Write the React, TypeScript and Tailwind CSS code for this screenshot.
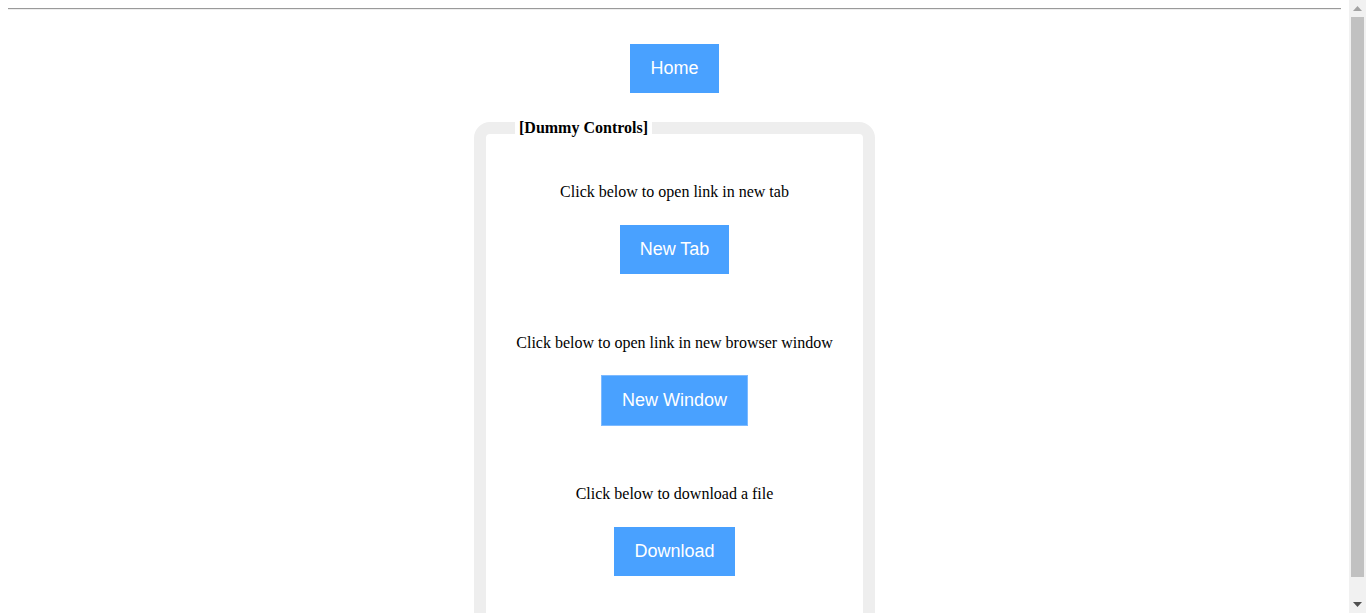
import React from "react";

const serif = { fontFamily: '"Liberation Serif", "Times New Roman", serif' };

function BlueButton({ label, bordered }: { label: string; bordered?: boolean }) {
  return (
    <button
      className={
        "bg-[#49a1ff] text-white text-[18px] leading-[21px] px-5 py-[14px] font-['Liberation_Sans',Arial,sans-serif] " +
        (bordered ? "border border-[#7dbaff]" : "")
      }
    >
      {label}
    </button>
  );
}

function Section({ text, label, bordered }: { text: string; label: string; bordered?: boolean }) {
  return (
    <div className="flex flex-col items-center">
      <p className="text-[16px] leading-[18px] text-black" style={serif}>
        {text}
      </p>
      <div className={bordered ? "mt-[23px]" : "mt-[24px]"}>
        <BlueButton label={label} bordered={bordered} />
      </div>
    </div>
  );
}

function Scrollbar() {
  return (
    <div className="w-[17px] h-full bg-[#f1f1f1] flex flex-col items-center shrink-0">
      <div className="h-[17px] flex items-center justify-center">
        <svg width="9" height="5" viewBox="0 0 9 5">
          <polygon points="4.5,0 9,5 0,5" fill="#a3a3a3" />
        </svg>
      </div>
      <div className="flex-1 w-[13px] bg-[#c1c1c1] mb-[19px]" />
      <div className="h-[17px] flex items-center justify-center">
        <svg width="9" height="5" viewBox="0 0 9 5">
          <polygon points="0,0 9,0 4.5,5" fill="#505050" />
        </svg>
      </div>
    </div>
  );
}

export default function App() {
  return (
    <div className="h-[613px] flex overflow-hidden bg-white">
      <div className="flex-1 min-w-0 px-2 pt-2">
        <hr className="border-t border-t-[#9a9a9a] border-b border-b-[#eeeeee]" />
        <div className="flex justify-center mt-[34px]">
          <BlueButton label="Home" />
        </div>
        <div className="flex justify-center mt-[26px]">
          <fieldset className="w-[401px] border-[12px] border-[#eeeeee] rounded-[16px] pb-[60px]">
            <legend className="ml-[29px] px-[4px] text-[16px] leading-[18px] font-bold text-black" style={serif}>
              [Dummy Controls]
            </legend>
            <div className="flex flex-col gap-[60px] pt-[46px]">
              <Section text="Click below to open link in new tab" label="New Tab" />
              <Section text="Click below to open link in new browser window" label="New Window" bordered />
              <div className="-mt-[1px]">
                <Section text="Click below to download a file" label="Download" />
              </div>
            </div>
          </fieldset>
        </div>
      </div>
      <Scrollbar />
    </div>
  );
}
